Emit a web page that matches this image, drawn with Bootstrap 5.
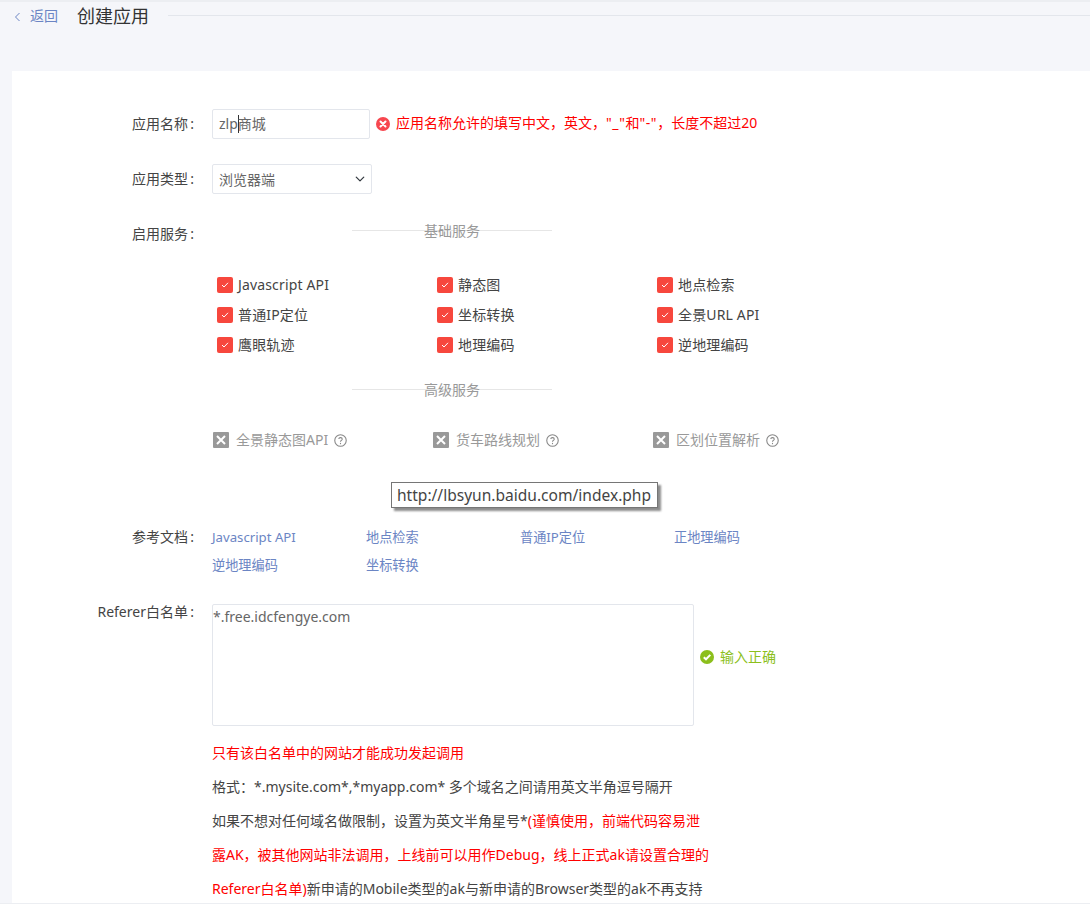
<!DOCTYPE html>
<html lang="zh">
<head>
<meta charset="utf-8">
<title>创建应用</title>
<link rel="stylesheet" href="https://cdn.jsdelivr.net/npm/bootstrap@5.3.0/dist/css/bootstrap.min.css">
<style>
html,body{height:904px;overflow:hidden}
body{background:#f5f6fa;font-family:"Noto Sans","Noto Sans CJK SC",sans-serif;font-size:14px;color:#444;line-height:20px;border-top:2px solid #eceef2}
a{text-decoration:none;color:#6b85c4}
.head-bar{height:69px;align-items:flex-start;padding-left:14px}
.back-link{font-size:14px;margin-top:4px;width:63px;color:#6b85c4}
.back-link svg{margin-right:8px;vertical-align:-1px}
.page-title{font-size:18px;font-weight:400;line-height:28px;margin:0;color:#333;width:91px}
.head-rule{height:1px;background:#e3e6ec;margin-top:13px}
.panel{background:#fff;margin-left:12px;height:833px;position:relative;padding-top:38px}
.form-line{display:flex;align-items:flex-start}
.line-label{width:182px;text-align:right;flex:none;margin-right:18px;color:#444;white-space:nowrap}
.label-tall{line-height:30px}
.label-doc{line-height:28px}
.label-ref{margin-top:-2px}
.name-input{width:158px;height:30px;border:1px solid #e3e6ec;border-radius:2px;padding:0 6px;font-size:14px;line-height:28px;color:#666}
.caret-mark{display:inline-block;width:1px;height:18px;background:#333;vertical-align:-4px;margin-right:-1px}
.err-tip{color:#f00;margin-left:6px;height:30px;display:flex;align-items:center;gap:6px}
.err-tip span{position:relative;top:-1px}
.err-tip .quote-gap{position:static;letter-spacing:.6px}
.type-select{width:160px;height:30px;min-height:30px;border:1px solid #e3e6ec;border-radius:2px;padding:2px 20px 0 6px;font-size:14px;line-height:26px;color:#666;background-position:right 4px center;background-size:14px 10px}
.line-type{margin-top:25px}
.line-svc{margin-top:30px;height:20px}
.sec-title{width:200px;margin-left:340px;height:1px;background:#e6e6e6;position:relative;text-align:center}
.sec-title span{position:absolute;left:0;right:0;top:-9px;color:#999;font-size:14px}
.sec-basic{margin-top:-14px}
.sec-adv{margin-top:29px}
.svc-grid{display:grid;grid-template-columns:repeat(3,220px);grid-auto-rows:30px;margin-left:205px;margin-top:39px;align-items:center}
.svc-item{display:flex;align-items:center;gap:5px;color:#444;font-size:14px;letter-spacing:.15px}
.tick-box{width:16px;height:16px;background:#f7473d;border-radius:2px;flex:none;display:flex;align-items:center;justify-content:center}
.adv-grid{display:grid;grid-template-columns:repeat(3,220px);margin-left:201px;margin-top:40px}
.adv-item{display:flex;align-items:center;color:#999;font-size:14px;gap:7px}
.adv-item .help-mark{margin-left:-1px}
.x-box{width:16px;height:16px;background:#999;border-radius:1px;flex:none;display:flex;align-items:center;justify-content:center}
.url-tip{position:absolute;left:379px;top:411px;height:26px;border:1px solid #767676;background:#fff;padding:0 6px 0 5px;font-size:15.55px;line-height:24px;color:#444;box-shadow:3px 3px 2px rgba(0,0,0,.45);white-space:nowrap;z-index:3}
.line-doc{margin-top:73px}
.doc-links{display:grid;grid-template-columns:repeat(4,154px);grid-auto-rows:28px;line-height:28px;font-size:13.2px}
.line-ref{margin-top:25px}
.ref-area{width:482px;height:122px;border:1px solid #e3e6ec;border-radius:2px;padding:2px 0;font-size:14px;color:#666;line-height:20px}
.ok-tip{color:#8cbf1c;display:flex;align-items:center;gap:6px;margin-left:6px;margin-top:43px;height:20px}
.note-stack{margin-left:200px;margin-top:10px;width:510px;line-height:34px;font-size:14px;color:#444;white-space:nowrap}
.note-stack p{margin:0}
.red-txt{color:#f00}
.page-foot{position:absolute;left:-12px;right:0;bottom:0;height:1px;background:#eceef2}
</style>
</head>
<body>
<div class="head-bar d-flex">
  <a class="back-link" href="#"><svg width="8" height="10" viewBox="0 0 8 10"><path d="M5.5 1 1.5 5l4 4" fill="none" stroke="#6b85c4"/></svg>返回</a>
  <h1 class="page-title">创建应用</h1>
  <div class="head-rule flex-grow-1"></div>
</div>
<main class="panel">
  <div class="form-line">
    <label class="line-label label-tall">应用名称&#8201;:</label>
    <div class="name-input">zlp<span class="caret-mark"></span>商城</div>
    <div class="err-tip">
      <svg width="14" height="14" viewBox="0 0 14 14"><circle cx="7" cy="7" r="7" fill="#f7474f"/><path d="M4.5 4.5l5 5m0-5l-5 5" stroke="#fff" stroke-width="2" stroke-linecap="round"/></svg>
      <span>应用名称允许的填写中文，英文，<span class="quote-gap">"_"</span>和<span class="quote-gap">"-"</span>，长度不超过20</span>
    </div>
  </div>
  <div class="form-line line-type">
    <label class="line-label label-tall">应用类型&#8201;:</label>
    <select class="form-select type-select"><option>浏览器端</option></select>
  </div>
  <div class="form-line line-svc">
    <label class="line-label">启用服务&#8201;:</label>
  </div>
  <div class="sec-title sec-basic"><span>基础服务</span></div>
  <div class="svc-grid">
    <div class="svc-item"><span class="tick-box"><svg width="10" height="8" viewBox="0 0 10 8"><path d="M2 4 4 6 8 1.8" fill="none" stroke="#fff"/></svg></span>Javascript API</div>
    <div class="svc-item"><span class="tick-box"><svg width="10" height="8" viewBox="0 0 10 8"><path d="M2 4 4 6 8 1.8" fill="none" stroke="#fff"/></svg></span>静态图</div>
    <div class="svc-item"><span class="tick-box"><svg width="10" height="8" viewBox="0 0 10 8"><path d="M2 4 4 6 8 1.8" fill="none" stroke="#fff"/></svg></span>地点检索</div>
    <div class="svc-item"><span class="tick-box"><svg width="10" height="8" viewBox="0 0 10 8"><path d="M2 4 4 6 8 1.8" fill="none" stroke="#fff"/></svg></span>普通IP定位</div>
    <div class="svc-item"><span class="tick-box"><svg width="10" height="8" viewBox="0 0 10 8"><path d="M2 4 4 6 8 1.8" fill="none" stroke="#fff"/></svg></span>坐标转换</div>
    <div class="svc-item"><span class="tick-box"><svg width="10" height="8" viewBox="0 0 10 8"><path d="M2 4 4 6 8 1.8" fill="none" stroke="#fff"/></svg></span>全景URL API</div>
    <div class="svc-item"><span class="tick-box"><svg width="10" height="8" viewBox="0 0 10 8"><path d="M2 4 4 6 8 1.8" fill="none" stroke="#fff"/></svg></span>鹰眼轨迹</div>
    <div class="svc-item"><span class="tick-box"><svg width="10" height="8" viewBox="0 0 10 8"><path d="M2 4 4 6 8 1.8" fill="none" stroke="#fff"/></svg></span>地理编码</div>
    <div class="svc-item"><span class="tick-box"><svg width="10" height="8" viewBox="0 0 10 8"><path d="M2 4 4 6 8 1.8" fill="none" stroke="#fff"/></svg></span>逆地理编码</div>
  </div>
  <div class="sec-title sec-adv"><span>高级服务</span></div>
  <div class="adv-grid">
    <div class="adv-item"><span class="x-box"><svg width="10" height="10" viewBox="0 0 10 10"><path d="M1 1l8 8m0-8L1 9" stroke="#fff" stroke-width="2"/></svg></span><span>全景静态图API</span><svg class="help-mark" width="13" height="13" viewBox="0 0 12 12"><circle cx="6" cy="6" r="5.3" fill="none" stroke="#888"/><path d="M4.4 4.6C4.6 2.8 7.7 3 7.6 4.8 7.5 6 6 5.9 6 7.2" fill="none" stroke="#888"/><path d="M6 8.2v1.2" stroke="#888"/></svg></div>
    <div class="adv-item"><span class="x-box"><svg width="10" height="10" viewBox="0 0 10 10"><path d="M1 1l8 8m0-8L1 9" stroke="#fff" stroke-width="2"/></svg></span><span>货车路线规划</span><svg class="help-mark" width="13" height="13" viewBox="0 0 12 12"><circle cx="6" cy="6" r="5.3" fill="none" stroke="#888"/><path d="M4.4 4.6C4.6 2.8 7.7 3 7.6 4.8 7.5 6 6 5.9 6 7.2" fill="none" stroke="#888"/><path d="M6 8.2v1.2" stroke="#888"/></svg></div>
    <div class="adv-item"><span class="x-box"><svg width="10" height="10" viewBox="0 0 10 10"><path d="M1 1l8 8m0-8L1 9" stroke="#fff" stroke-width="2"/></svg></span><span>区划位置解析</span><svg class="help-mark" width="13" height="13" viewBox="0 0 12 12"><circle cx="6" cy="6" r="5.3" fill="none" stroke="#888"/><path d="M4.4 4.6C4.6 2.8 7.7 3 7.6 4.8 7.5 6 6 5.9 6 7.2" fill="none" stroke="#888"/><path d="M6 8.2v1.2" stroke="#888"/></svg></div>
  </div>
  <div class="url-tip">http://lbsyun.baidu.com/index.php</div>
  <div class="form-line line-doc">
    <label class="line-label label-doc">参考文档&#8201;:</label>
    <div class="doc-links">
      <a href="#">Javascript API</a><a href="#">地点检索</a><a href="#">普通IP定位</a><a href="#">正地理编码</a>
      <a href="#">逆地理编码</a><a href="#">坐标转换</a>
    </div>
  </div>
  <div class="form-line line-ref">
    <label class="line-label label-ref">Referer白名单&#8201;:</label>
    <div class="ref-area">*.free.idcfengye.com</div>
    <div class="ok-tip">
      <svg width="14" height="14" viewBox="0 0 14 14"><circle cx="7" cy="7" r="7" fill="#8cbf1c"/><path d="M3.8 7.2 6 9.3l4.3-4.4" fill="none" stroke="#fff" stroke-width="2"/></svg>
      <span>输入正确</span>
    </div>
  </div>
  <div class="note-stack">
    <p class="red-txt">只有该白名单中的网站才能成功发起调用</p>
    <p>格式：*.mysite.com*,*myapp.com* 多个域名之间请用英文半角逗号隔开</p>
    <p>如果不想对任何域名做限制，设置为英文半角星号*<span class="red-txt">(谨慎使用，前端代码容易泄<br>露AK，被其他网站非法调用，上线前可以用作Debug，线上正式ak请设置合理的<br>Referer白名单)</span>新申请的Mobile类型的ak与新申请的Browser类型的ak不再支持</p>
  </div>
  <div class="page-foot"></div>
</main>
<script src="https://cdn.jsdelivr.net/npm/bootstrap@5.3.0/dist/js/bootstrap.bundle.min.js"></script>
</body>
</html>
